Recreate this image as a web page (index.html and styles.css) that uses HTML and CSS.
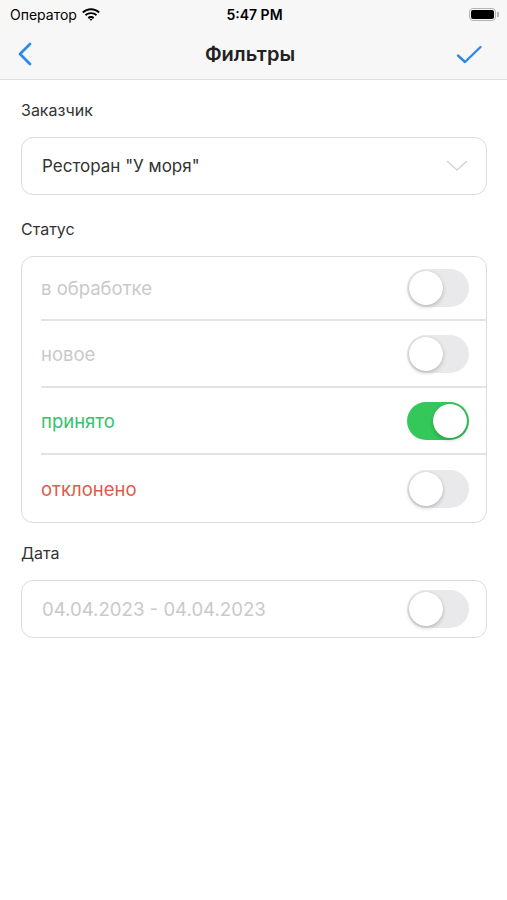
FILE: index.html
```html
<!DOCTYPE html>
<html lang="ru">
<head>
    <meta charset="UTF-8">
    <meta name="viewport" content="width=device-width, initial-scale=1.0">
    <title>Фильтры</title>
    <link rel="stylesheet" href="styles.css">
</head>
<body>
    <div class="top">
        <div class="status-bar">
            <div class="carrier">
                <span>Оператор</span>
                <svg class="wifi" width="18" height="13" viewBox="0 0 18 13">
                    <path d="M9 2.2c2.9 0 5.5 1.1 7.5 3l1.3-1.4C15.5 1.6 12.4.3 9 .3S2.5 1.6.2 3.8l1.3 1.4c2-1.9 4.6-3 7.5-3z" fill="#000"/>
                    <path d="M9 6.1c1.8 0 3.5.7 4.8 1.9l1.3-1.4C13.5 5 11.3 4.2 9 4.2S4.5 5 2.9 6.6L4.2 8C5.5 6.8 7.2 6.1 9 6.1z" fill="#000"/>
                    <path d="M9 10.1c.7 0 1.4.3 1.9.8L12.3 9.5C11.4 8.6 10.3 8.1 9 8.1s-2.4.5-3.3 1.4l1.4 1.4c.5-.5 1.2-.8 1.900-.8z" fill="#000"/>
                    <path d="M9 12.8l1.5-1.5c-.4-.4-.9-.6-1.5-.6s-1.1.2-1.5.6z" fill="#000"/>
                </svg>
            </div>
            <div class="clock">5:47 PM</div>
            <div class="battery">
                <div class="battery-body"><div class="battery-level"></div></div>
                <div class="battery-tip"></div>
            </div>
        </div>
        <div class="nav-bar">
            <svg class="nav-icon" width="16" height="24" viewBox="0 0 16 24">
                <path d="M13 2L3 12l10 10" fill="none" stroke="#2c8be8" stroke-width="2.8" stroke-linecap="round" stroke-linejoin="round"/>
            </svg>
            <h1>Фильтры</h1>
            <svg class="nav-icon" width="28" height="22" viewBox="0 0 28 22">
                <path d="M3 12.5l7 6.5L25.5 4" fill="none" stroke="#2c8be8" stroke-width="2.4" stroke-linecap="round" stroke-linejoin="round"/>
            </svg>
        </div>
    </div>

    <div class="content">
        <div class="section-title">Заказчик</div>
        <div class="field select">
            <span>Ресторан "У моря"</span>
            <svg width="22" height="12" viewBox="0 0 22 12">
                <path d="M1.5 1.5L11 10l9.5-8.5" fill="none" stroke="#d4d4d8" stroke-width="1.6" stroke-linecap="round" stroke-linejoin="round"/>
            </svg>
        </div>

        <div class="section-title">Статус</div>
        <div class="card">
            <div class="row">
                <span class="label muted">в обработке</span>
                <div class="switch"></div>
            </div>
            <div class="row">
                <span class="label muted">новое</span>
                <div class="switch"></div>
            </div>
            <div class="row">
                <span class="label accepted">принято</span>
                <div class="switch on"></div>
            </div>
            <div class="row">
                <span class="label rejected">отклонено</span>
                <div class="switch"></div>
            </div>
        </div>

        <div class="section-title">Дата</div>
        <div class="field date">
            <span class="muted">04.04.2023 - 04.04.2023</span>
            <div class="switch"></div>
        </div>
    </div>
</body>
</html>
```

FILE: styles.css
```css
* {
    margin: 0;
    padding: 0;
    box-sizing: border-box;
}

body {
    font-family: Inter, "Noto Sans", Arial, sans-serif;
    background-color: white;
    color: #333;
    width: 507px;
    min-height: 900px;
}

/* Top bars */
.top {
    background-color: #f7f7f7;
    border-bottom: 1px solid #dedede;
}

.status-bar {
    height: 28px;
    display: flex;
    align-items: center;
    justify-content: space-between;
    padding: 0 8px 0 10px;
}

.carrier {
    display: flex;
    align-items: center;
    gap: 5px;
    font-size: 14px;
    color: #000;
    width: 120px;
}

.clock {
    font-size: 14px;
    font-weight: 600;
    color: #000;
}

.battery {
    width: 120px;
    display: flex;
    align-items: center;
    justify-content: flex-end;
}

.battery-body {
    width: 27px;
    height: 13px;
    border: 1px solid #b5b5b5;
    border-radius: 4px;
    padding: 1px;
}

.battery-level {
    width: 100%;
    height: 100%;
    background-color: #000;
    border-radius: 2px;
}

.battery-tip {
    width: 2px;
    height: 5px;
    background-color: #b5b5b5;
    border-radius: 0 1px 1px 0;
    margin-left: 1px;
}

.nav-bar {
    height: 51px;
    display: flex;
    align-items: center;
    justify-content: space-between;
    padding: 0 24px 0 17px;
}

.nav-bar h1 {
    font-size: 20px;
    font-weight: 600;
    color: #222;
    margin-left: 12px;
}

/* Content */
.content {
    padding: 20px 20px 0 21px;
}

.section-title {
    font-size: 16px;
    color: #333;
    margin-bottom: 17px;
}

.field {
    height: 58px;
    border: 1px solid #dcdcdc;
    border-radius: 12px;
    display: flex;
    align-items: center;
    justify-content: space-between;
    margin-bottom: 24px;
}

.select {
    padding: 0 18px 0 20px;
    font-size: 17px;
    color: #333;
}

.date {
    padding: 0 17px 0 20px;
    font-size: 18.6px;
}

.card {
    border: 1px solid #dcdcdc;
    border-radius: 12px;
    padding-left: 19px;
    margin-bottom: 20px;
}

.row {
    height: 67px;
    display: flex;
    align-items: center;
    justify-content: space-between;
    padding-right: 17px;
    border-bottom: 2px solid #e3e3e3;
    font-size: 18.5px;
}

.row:first-child {
    height: 64px;
}

.row:last-child {
    border-bottom: none;
}

.muted {
    color: #c9c9cc;
}

.accepted {
    color: #34c36a;
}

.rejected {
    color: #e05a48;
}

/* Toggle */
.switch {
    width: 62px;
    height: 38px;
    border-radius: 19px;
    background-color: #e9e9eb;
    position: relative;
}

.switch::after {
    content: "";
    position: absolute;
    top: 2px;
    left: 2px;
    width: 34px;
    height: 34px;
    border-radius: 50%;
    background-color: white;
    box-shadow: 0 2px 4px rgba(0,0,0,0.2), 0 0 1px rgba(0,0,0,0.15);
}

.switch.on {
    background-color: #34c759;
}

.switch.on::after {
    left: 26px;
}
```
